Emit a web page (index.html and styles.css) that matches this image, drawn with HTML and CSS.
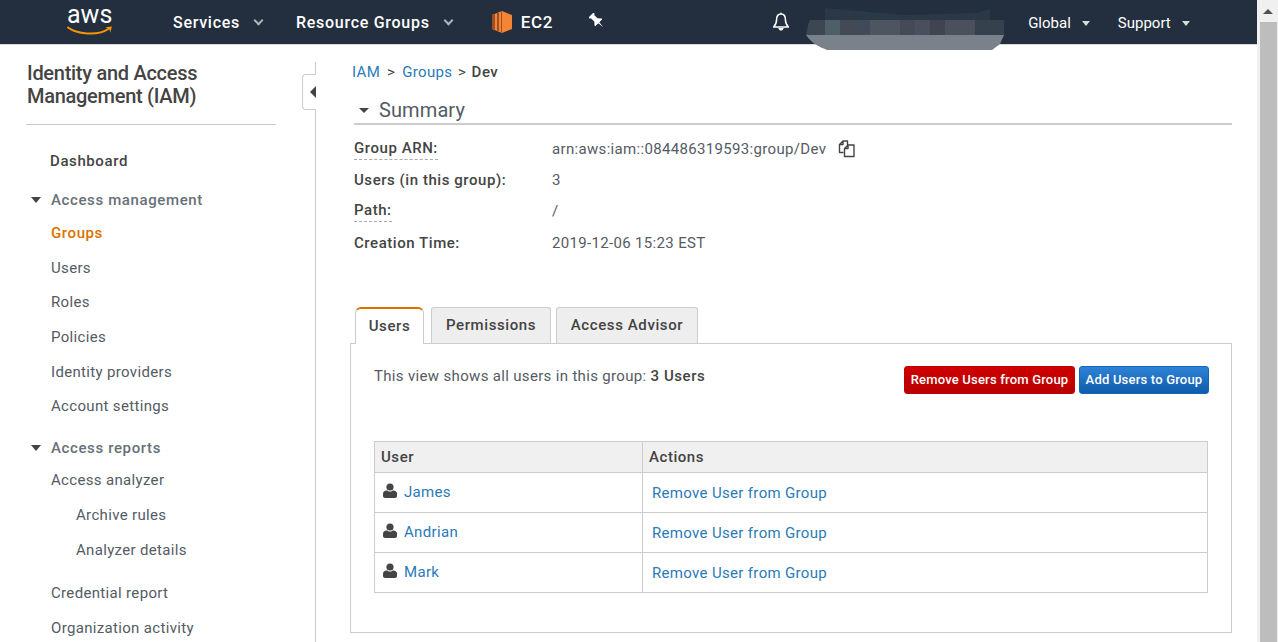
FILE: index.html
```html
<!DOCTYPE html>
<html lang="en">

<head>
    <meta charset="UTF-8">
    <meta name="viewport" content="width=device-width, initial-scale=1.0">
    <title>IAM Management Console</title>

    <link rel="stylesheet" href="styles.css">
</head>

<body>
    <div class="window">
        <div class="page">
            <header class="topbar">
                <a class="logo">
                    <span class="logo-text">aws</span>
                    <svg class="logo-smile" width="46" height="10" viewBox="0 0 46 10">
                        <path d="M1 1.5C9 7.5 30 11 42 2.5" fill="none" stroke="#f79400" stroke-width="2" stroke-linecap="round" />
                        <path d="M38.5 1.2L45 .6 43.2 6.5 42.4 3.2z" fill="#f79400" />
                    </svg>
                </a>
                <a class="nav-item nav-services">Services<i class="chevron"></i></a>
                <a class="nav-item nav-groups">Resource Groups<i class="chevron"></i></a>
                <a class="nav-item nav-ec2">
                    <svg class="ec2-icon" width="20" height="22" viewBox="0 0 20 22">
                        <path d="M10 0L20 4V18L10 22 0 18V4z" fill="#f58534" />
                        <path d="M0 4L3 3V19L0 18zM5 2.2L7 1.4V20.6L5 19.8zM9 .5L10 0V22L9 21.5z" fill="#9d5025" />
                    </svg>
                    EC2
                </a>
                <svg class="pin-icon" width="16" height="16" viewBox="0 0 16 16">
                    <path transform="rotate(-45 8 8)" d="M4.5 -.5H11.5V1L10.3 2V6.5L13 9.5V10.5H8.7L8 17 7.3 10.5H3V9.5L5.7 6.5V2L4.5 1z" fill="#fff" />
                </svg>
                <svg class="bell-icon" width="18" height="20" viewBox="0 0 18 20">
                    <path d="M9 2C6 2 4.6 4.3 4.6 7.5 4.6 11 3.6 13 1.6 15H16.4C14.4 13 13.4 11 13.4 7.5 13.4 4.3 12 2 9 2z" fill="none" stroke="#fff" stroke-width="1.5" stroke-linejoin="round" />
                    <path d="M9 .4V2M6.8 16.5C7.2 18.6 10.8 18.6 11.2 16.5z" fill="#fff" stroke="#fff" stroke-width="1" />
                </svg>
                <a class="nav-item nav-global">Global<i class="chevron-small"></i></a>
                <a class="nav-item nav-support">Support<i class="chevron-small"></i></a>
            </header>

            <svg class="redaction" width="198" height="42" viewBox="0 0 198 42">
                <path d="M19 0L100 7 170 5 184 1V12H19z" fill="#2b3947" />
                <path d="M0 27C6 36 14 39 21 42H186L194 36 198 27z" fill="#7a818b" />
                <path d="M4 12H198V27H0C1 22 2 16 4 12z" fill="#3d4754" />
                <rect x="19" y="12" width="15" height="15" fill="#4f5f68" />
                <rect x="34" y="12" width="15" height="15" fill="#434a56" />
                <rect x="49" y="12" width="15" height="15" fill="#3f4b58" />
                <rect x="64" y="12" width="30" height="15" fill="#4d5561" />
                <rect x="94" y="12" width="15" height="15" fill="#444a56" />
                <rect x="109" y="12" width="15" height="15" fill="#494f5c" />
                <rect x="124" y="12" width="15" height="15" fill="#3f4450" />
                <rect x="139" y="12" width="30" height="15" fill="#4a505c" />
                <rect x="169" y="12" width="29" height="15" fill="#36414e" />
            </svg>

            <div class="layout">
                <nav class="sidebar">
                    <h2 class="sidebar-title">Identity and Access Management (IAM)</h2>
                    <a class="side-link side-dashboard">Dashboard</a>

                    <h3 class="side-heading side-heading-first"><i class="caret"></i>Access management</h3>
                    <a class="side-link side-active">Groups</a>
                    <a class="side-link">Users</a>
                    <a class="side-link">Roles</a>
                    <a class="side-link">Policies</a>
                    <a class="side-link">Identity providers</a>
                    <a class="side-link">Account settings</a>

                    <h3 class="side-heading side-heading-second"><i class="caret"></i>Access reports</h3>
                    <a class="side-link side-analyzer">Access analyzer</a>
                    <a class="side-link side-sub">Archive rules</a>
                    <a class="side-link side-sub">Analyzer details</a>
                    <a class="side-link side-report">Credential report</a>
                    <a class="side-link">Organization activity</a>
                </nav>

                <button class="collapse"><i class="collapse-arrow"></i></button>

                <main class="content">
                    <div class="breadcrumb">
                        <a class="link">IAM</a><span class="crumb-sep">&gt;</span><a class="link">Groups</a><span class="crumb-sep">&gt;</span><b>Dev</b>
                    </div>

                    <h2 class="section-title"><i class="caret"></i>Summary</h2>

                    <dl class="summary">
                        <dt><span class="dashed">Group ARN:</span></dt>
                        <dd>arn:aws:iam::084486319593:group/Dev
                            <svg class="copy-icon" width="18" height="18" viewBox="0 0 18 18">
                                <path d="M5.5 12.5H1.5V4.5L5 1H9.5V5M5 1V4.5H1.5" fill="none" stroke="#444" stroke-width="1.4" stroke-linejoin="round" />
                                <path d="M6.5 16.5V8.5L10 5H16V16.5zM10 5V8.5H6.5" fill="none" stroke="#444" stroke-width="1.4" stroke-linejoin="round" />
                            </svg>
                        </dd>
                        <dt>Users (in this group):</dt>
                        <dd>3</dd>
                        <dt><span class="dashed">Path:</span></dt>
                        <dd>/</dd>
                        <dt>Creation Time:</dt>
                        <dd>2019-12-06 15:23 EST</dd>
                    </dl>

                    <div class="tabs">
                        <a class="tab tab-active">Users</a>
                        <a class="tab">Permissions</a>
                        <a class="tab">Access Advisor</a>
                    </div>

                    <section class="panel">
                        <div class="panel-head">
                            <p class="panel-note">This view shows all users in this group: <b>3 Users</b></p>
                            <div class="panel-actions">
                                <button class="btn btn-red">Remove Users from Group</button>
                                <button class="btn btn-blue">Add Users to Group</button>
                            </div>
                        </div>

                        <table class="users">
                            <thead>
                                <tr>
                                    <th class="col-user">User</th>
                                    <th>Actions</th>
                                </tr>
                            </thead>
                            <tbody>
                                <tr>
                                    <td class="user-cell">
                                        <svg class="user-icon" width="14" height="15" viewBox="0 0 14 15">
                                            <circle cx="7" cy="4" r="3.6" fill="#444" />
                                            <path d="M0 13V10.5C0 8.5 2 7.6 4 7.2 5 9 9 9 10 7.2 12 7.6 14 8.5 14 10.5V13C14 14.2 13 15 12 15H2C1 15 0 14.2 0 13z" fill="#444" />
                                        </svg><a class="link">James</a>
                                    </td>
                                    <td class="action-cell"><a class="link">Remove User from Group</a></td>
                                </tr>
                                <tr>
                                    <td class="user-cell">
                                        <svg class="user-icon" width="14" height="15" viewBox="0 0 14 15">
                                            <circle cx="7" cy="4" r="3.6" fill="#444" />
                                            <path d="M0 13V10.5C0 8.5 2 7.6 4 7.2 5 9 9 9 10 7.2 12 7.6 14 8.5 14 10.5V13C14 14.2 13 15 12 15H2C1 15 0 14.2 0 13z" fill="#444" />
                                        </svg><a class="link">Andrian</a>
                                    </td>
                                    <td class="action-cell"><a class="link">Remove User from Group</a></td>
                                </tr>
                                <tr>
                                    <td class="user-cell">
                                        <svg class="user-icon" width="14" height="15" viewBox="0 0 14 15">
                                            <circle cx="7" cy="4" r="3.6" fill="#444" />
                                            <path d="M0 13V10.5C0 8.5 2 7.6 4 7.2 5 9 9 9 10 7.2 12 7.6 14 8.5 14 10.5V13C14 14.2 13 15 12 15H2C1 15 0 14.2 0 13z" fill="#444" />
                                        </svg><a class="link">Mark</a>
                                    </td>
                                    <td class="action-cell"><a class="link">Remove User from Group</a></td>
                                </tr>
                            </tbody>
                        </table>
                    </section>
                </main>
            </div>
        </div>

        <div class="scrollbar">
            <i class="scroll-arrow"></i>
            <div class="scroll-thumb"></div>
        </div>
    </div>
</body>

</html>
```

FILE: styles.css
```css
* {
    box-sizing: border-box;
}

html,
body {
    height: 100%;
    margin: 0;
    overflow: hidden;
}

body {
    font-family: Roboto, 'Liberation Sans', sans-serif;
    font-size: 15px;
    letter-spacing: .33px;
    color: #444;
    background-color: #fff;
}

.window {
    display: flex;
    height: 642px;
}

.page {
    position: relative;
    flex: 1;
    min-width: 0;
    overflow: hidden;
}

/* top bar */
.topbar {
    display: flex;
    align-items: center;
    height: 45px;
    background-color: #232f3e;
    border-bottom: 1px solid #d5dbdb;
    color: #fff;
}

.logo {
    position: relative;
    width: 46px;
    height: 30px;
    margin-left: 67px;
    margin-top: -14px;
}

.logo-text {
    display: block;
    font-size: 25px;
    line-height: 30px;
    letter-spacing: 0;
}

.logo-smile {
    position: absolute;
    left: 0;
    top: 26px;
}

.nav-item {
    display: flex;
    align-items: center;
    white-space: nowrap;
}

.nav-services,
.nav-groups,
.nav-ec2 {
    font-size: 16px;
    font-weight: 500;
    letter-spacing: .72px;
}

.nav-services {
    margin-left: 60px;
}

.nav-groups {
    margin-left: 34px;
}

.nav-ec2 {
    margin-left: 40px;
    font-size: 17px;
}

.chevron {
    width: 7px;
    height: 7px;
    margin: -4px 0 0 15px;
    border-right: 2px solid #aab7b8;
    border-bottom: 2px solid #aab7b8;
    transform: rotate(45deg);
}

.chevron-small {
    width: 0;
    height: 0;
    margin-left: 11px;
    border-left: 4px solid transparent;
    border-right: 4px solid transparent;
    border-top: 5px solid #d5dbdb;
}

.ec2-icon {
    margin-right: 9px;
}

.pin-icon {
    margin-left: 36px;
    margin-top: -3px;
}

.bell-icon {
    margin-left: 167px;
}

.nav-global,
.nav-support {
    margin-top: 2px;
    font-size: 15px;
    letter-spacing: 0;
}

.nav-global {
    margin-left: 238px;
}

.nav-support {
    margin-left: 28px;
}

.redaction {
    position: absolute;
    left: 806px;
    top: 8px;
}

/* sidebar */
.layout {
    position: relative;
    display: flex;
}

.sidebar {
    display: flex;
    flex-direction: column;
    align-items: flex-start;
    flex: 0 0 315px;
    height: 580px;
    margin-top: 17px;
    padding: 0 39px 0 26px;
    border-right: 1px solid #ccc;
}

.sidebar-title {
    width: 250px;
    height: 63px;
    margin: 0;
    padding-left: 1px;
    border-bottom: 1px solid #c8c8c8;
    font-size: 20px;
    font-weight: 500;
    line-height: 23px;
    letter-spacing: -.28px;
    color: #444;
}

.side-link {
    margin-top: 14.7px;
    padding-left: 25px;
    line-height: 20px;
    color: #545b64;
    white-space: nowrap;
}

.side-dashboard {
    margin-top: 26px;
    padding-left: 24px;
    font-weight: 500;
    letter-spacing: .6px;
    color: #444;
}

.side-active {
    margin-top: 13px;
    font-weight: 500;
    letter-spacing: .6px;
    color: #dd7000;
}

.side-heading {
    display: flex;
    align-items: center;
    margin: 0;
    padding-left: 5px;
    font-size: 15px;
    font-weight: 500;
    line-height: 20px;
    letter-spacing: .62px;
    color: #687078;
}

.side-heading-first {
    margin-top: 19px;
}

.side-heading-second {
    margin-top: 22px;
}

.side-heading .caret {
    margin-right: 10px;
}

.side-analyzer {
    margin-top: 12px;
}

.side-sub {
    padding-left: 50px;
}

.side-report {
    margin-top: 23px;
}

.caret {
    display: inline-block;
    width: 0;
    height: 0;
    border-left: 5.5px solid transparent;
    border-right: 5.5px solid transparent;
    border-top: 6px solid #444;
}

.collapse {
    position: absolute;
    left: 302px;
    top: 29px;
    width: 14px;
    height: 36px;
    padding: 0;
    background-color: #fff;
    border: 1px solid #ccc;
    border-right: 0;
    border-radius: 4px 0 0 4px;
}

.collapse-arrow {
    display: block;
    width: 0;
    height: 0;
    margin-left: 7px;
    border-top: 6px solid transparent;
    border-bottom: 6px solid transparent;
    border-right: 6px solid #444;
}

/* main column */
.content {
    flex: 1;
    min-width: 0;
    padding: 17px 25px 0 34px;
}

.link {
    color: #2a7ab8;
}

.breadcrumb {
    display: flex;
    align-items: center;
    margin-left: 2px;
    line-height: 20px;
}

.breadcrumb b {
    font-weight: 500;
    letter-spacing: .5px;
}

.crumb-sep {
    margin: 0 7px;
}

.crumb-sep:last-of-type {
    margin: 0 5.5px;
}

.section-title {
    display: flex;
    align-items: center;
    height: 36px;
    margin: 7px 0 0 4px;
    padding: 8px 0 0 5px;
    border-bottom: 2px solid #ccc;
    font-size: 20px;
    font-weight: 400;
    line-height: 30px;
    letter-spacing: .1px;
    color: #545b64;
}

.section-title .caret {
    margin-right: 10px;
    border-left-width: 5px;
    border-right-width: 5px;
    border-top-width: 5px;
}

.summary {
    display: grid;
    grid-template-columns: 198px 1fr;
    grid-auto-rows: 31.4px;
    align-items: center;
    margin: 8px 0 0 4px;
    line-height: 20px;
}

.summary dt {
    font-weight: 500;
    letter-spacing: .55px;
}

.summary dd {
    display: flex;
    align-items: center;
    margin: 0;
    color: #545b64;
    white-space: nowrap;
}

.dashed {
    display: inline-block;
    padding-bottom: 1px;
    border-bottom: 1px dashed #aaa;
}

.copy-icon {
    margin-left: 12px;
}

/* tabs */
.tabs {
    display: flex;
    gap: 6px;
    margin: 48px 0 0 5px;
}

.tab {
    position: relative;
    display: flex;
    align-items: center;
    justify-content: center;
    width: 120px;
    height: 36px;
    margin-bottom: -1px;
    background-color: #eee;
    border: 1px solid #ccc;
    border-bottom: 0;
    border-radius: 3px 3px 0 0;
    font-weight: 500;
    letter-spacing: .6px;
    color: #444;
}

.tab:nth-child(3) {
    width: 142px;
    margin-left: -1px;
}

.tab-active {
    width: 69px;
    height: 37px;
    margin-right: 1px;
    background-color: #fff;
    border-top: 2px solid #dd7000;
    border-radius: 6px 6px 0 0;
    z-index: 1;
}

.panel {
    height: 290px;
    padding: 22px 23px 0;
    border: 1px solid #ccc;
}

.panel-head {
    display: flex;
    justify-content: space-between;
    height: 75px;
}

.panel-note {
    margin: 0;
    line-height: 20px;
    color: #545b64;
}

.panel-note b {
    font-weight: 500;
    letter-spacing: .55px;
    color: #444;
}

.panel-actions {
    display: flex;
    gap: 4px;
    height: 28px;
    margin-right: -1px;
}

.btn {
    height: 28px;
    padding: 0;
    border: 1px solid transparent;
    border-radius: 3px;
    font-family: inherit;
    font-size: 13px;
    font-weight: 500;
    letter-spacing: .2px;
    color: #fff;
    white-space: nowrap;
}

.btn-red {
    width: 171px;
    background: linear-gradient(#cf0000, #b90000);
    border-color: #c00000;
}

.btn-blue {
    width: 130px;
    background: linear-gradient(#2f82d6, #0f5cab);
    border-color: #1166bb;
}

/* users table */
.users {
    width: 834px;
    border-collapse: collapse;
    table-layout: fixed;
}

.users th,
.users td {
    border: 1px solid #ccc;
    padding: 0 6px;
    text-align: left;
}

.users th {
    height: 31px;
    background-color: #f0f0f0;
    font-weight: 500;
    letter-spacing: .55px;
    color: #444;
}

.users td {
    height: 40px;
}

.col-user {
    width: 268px;
}

.users .user-cell {
    padding-top: 9px;
    vertical-align: top;
    line-height: 20px;
    white-space: nowrap;
}

.user-icon {
    margin: 0 7px 0 2px;
    vertical-align: -1px;
}

.users .action-cell {
    padding: 2px 6px 0 9px;
}

/* scrollbar */
.scrollbar {
    display: flex;
    flex-direction: column;
    align-items: center;
    flex: 0 0 21px;
    padding: 9px 1px 0 2px;
    background-color: #f0f0f0;
}

.scroll-arrow {
    width: 0;
    height: 0;
    border-left: 5px solid transparent;
    border-right: 5px solid transparent;
    border-bottom: 5px solid #505050;
}

.scroll-thumb {
    flex: 1;
    width: 17px;
    margin-top: 8px;
    background-color: #bdbdbd;
}
```
